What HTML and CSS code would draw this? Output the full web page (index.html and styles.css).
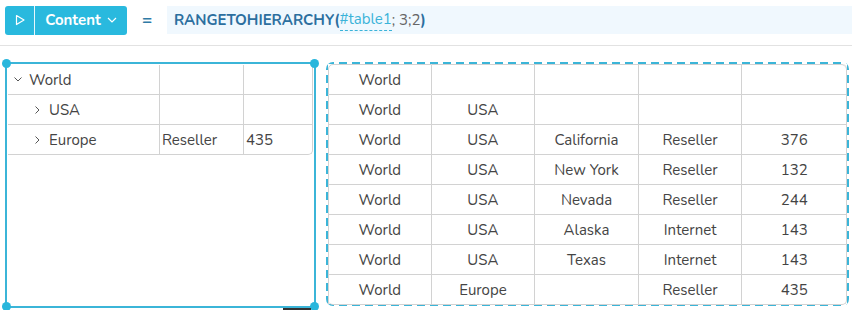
FILE: index.html
```html
<!DOCTYPE html>
<html lang="en">
<head>
  <meta charset="UTF-8">
  <title>Range to hierarchy</title>
  <link rel="stylesheet" href="styles.css">
</head>
<body>
  <div class="toolbar">
    <div class="btn-group">
      <button class="btn-run">
        <svg width="12" height="12" viewBox="0 0 12 12"><path d="M2.5 1.5 L10 6 L2.5 10.5 Z" fill="none" stroke="#fff" stroke-width="1.2" stroke-linejoin="round"/></svg>
      </button>
      <button class="btn-mode">Content
        <svg width="10" height="6" viewBox="0 0 10 6"><path d="M1 1 L5 5 L9 1" fill="none" stroke="#fff" stroke-width="1.2"/></svg>
      </button>
    </div>
    <div class="equals">=</div>
    <div class="formula">
      <span class="fn">RANGETOHIERARCHY(</span><span class="ref">#table1</span><span class="args">; 3;2</span><span class="fn">)</span>
    </div>
  </div>

  <div class="sheet">
    <div class="selection">
      <span class="dot tl"></span><span class="dot tr"></span>
      <span class="dot bl"></span><span class="dot br"></span>
      <table class="tree">
        <colgroup><col class="c1"><col class="c2"><col class="c3"></colgroup>
        <tr>
          <td class="lvl1"><svg class="chev" width="8" height="5" viewBox="0 0 8 5"><path d="M0.5 0.5 L4 4 L7.5 0.5" fill="none" stroke="#555" stroke-width="1"/></svg>World</td>
          <td></td>
          <td></td>
        </tr>
        <tr>
          <td class="lvl2"><svg class="chev" width="5" height="8" viewBox="0 0 5 8"><path d="M0.5 0.5 L4 4 L0.5 7.5" fill="none" stroke="#555" stroke-width="1"/></svg>USA</td>
          <td></td>
          <td></td>
        </tr>
        <tr>
          <td class="lvl2"><svg class="chev" width="5" height="8" viewBox="0 0 5 8"><path d="M0.5 0.5 L4 4 L0.5 7.5" fill="none" stroke="#555" stroke-width="1"/></svg>Europe</td>
          <td>Reseller</td>
          <td>435</td>
        </tr>
      </table>
    </div>

    <div class="source">
      <table class="flat">
        <tr><td>World</td><td></td><td></td><td></td><td></td></tr>
        <tr><td>World</td><td>USA</td><td></td><td></td><td></td></tr>
        <tr><td>World</td><td>USA</td><td>California</td><td>Reseller</td><td>376</td></tr>
        <tr><td>World</td><td>USA</td><td>New York</td><td>Reseller</td><td>132</td></tr>
        <tr><td>World</td><td>USA</td><td>Nevada</td><td>Reseller</td><td>244</td></tr>
        <tr><td>World</td><td>USA</td><td>Alaska</td><td>Internet</td><td>143</td></tr>
        <tr><td>World</td><td>USA</td><td>Texas</td><td>Internet</td><td>143</td></tr>
        <tr><td>World</td><td>Europe</td><td></td><td>Reseller</td><td>435</td></tr>
      </table>
    </div>
  </div>
  <div class="scroll-thumb"></div>
</body>
</html>
```

FILE: styles.css
```css
body {
  margin: 0;
  font-family: "Nunito", "Lato", "Noto Sans", sans-serif;
  color: #444;
  background: #fff;
  width: 852px;
  height: 310px;
  overflow: hidden;
  position: relative;
}

.toolbar {
  display: flex;
  align-items: center;
  height: 46px;
  padding-left: 5px;
  border-bottom: 1px solid #e2e2e2;
  box-sizing: border-box;
}

.btn-group {
  display: flex;
  height: 29px;
  background: #29b9de;
  border-radius: 3px;
  margin-top: -5px;
}

.btn-group button {
  border: none;
  background: none;
  color: #fff;
  font-family: inherit;
  cursor: pointer;
  display: flex;
  align-items: center;
  padding: 0;
}

.btn-run {
  width: 30px;
  justify-content: center;
  border-right: 1px solid #e8f7fc !important;
}

.btn-mode {
  width: 92px;
  justify-content: center;
  gap: 6px;
  font-size: 15px;
  font-weight: 700;
}

.equals {
  width: 40px;
  text-align: center;
  color: #2f7aa6;
  font-size: 17px;
  font-weight: 700;
  margin-top: -5px;
}

.formula {
  flex: 1;
  height: 28px;
  margin-top: -5px;
  background: #f0f8fe;
  display: flex;
  align-items: center;
  padding-left: 7px;
  font-size: 15px;
}

.fn {
  color: #2c6f9f;
  font-weight: 700;
}

.ref {
  color: #3ab3d9;
  border-bottom: 1px dashed #3ab3d9;
  padding-bottom: 1px;
}

.args {
  color: #666;
}

.sheet {
  display: flex;
  gap: 10px;
  padding: 16px 0 0 5px;
}

.selection {
  position: relative;
  width: 305px;
  height: 240px;
  border: 2px solid #3bb5d8;
  padding: 1px;
}

.dot {
  position: absolute;
  width: 9px;
  height: 9px;
  border-radius: 50%;
  background: #29b6dc;
}

.dot.tl { left: -5px; top: -5px; }
.dot.tr { right: -5px; top: -5px; }
.dot.bl { left: -5px; bottom: -5px; }
.dot.br { right: -5px; bottom: -5px; }

table {
  border-collapse: separate;
  border-spacing: 0;
  font-size: 15px;
  table-layout: fixed;
}

td {
  height: 29px;
  padding: 0;
  border-right: 1px solid #d2d2d2;
  border-bottom: 1px solid #d2d2d2;
  white-space: nowrap;
}

tr td:last-child {
  border-right: none;
}

.tree {
  width: 305px;
  border: 1px solid #d2d2d2;
  border-top: none;
  border-left: none;
  border-radius: 0 0 5px 0;
}

.tree tr:last-child td {
  border-bottom: none;
}

.tree td {
  padding-left: 2px;
}

.c1 { width: 152px; }
.c2 { width: 84px; }

.tree .lvl1 {
  padding-left: 6px;
}

.tree .lvl2 {
  padding-left: 27px;
}

.chev {
  margin-right: 7px;
  vertical-align: middle;
  position: relative;
  top: -1px;
}

.lvl2 .chev {
  margin-right: 9px;
}

.source {
  width: 519px;
  height: 240px;
  padding: 2px;
  border-radius: 7px;
  background-image:
    repeating-linear-gradient(90deg, #3bb5d8 0 8px, transparent 8px 13px),
    repeating-linear-gradient(90deg, #3bb5d8 0 8px, transparent 8px 13px),
    repeating-linear-gradient(180deg, #3bb5d8 0 8px, transparent 8px 13px),
    repeating-linear-gradient(180deg, #3bb5d8 0 8px, transparent 8px 13px);
  background-size: 100% 2px, 100% 2px, 2px 100%, 2px 100%;
  background-position: left top, left bottom, left top, right top;
  background-repeat: no-repeat;
}

.flat {
  width: 519px;
  border: 1px solid #d2d2d2;
  border-radius: 5px;
  border-left: none;
  border-top: none;
}

.flat tr:first-child td {
  border-top: 1px solid #d2d2d2;
}

.flat tr td:first-child {
  border-left: 1px solid #d2d2d2;
}

.flat tr:first-child td:first-child { border-top-left-radius: 5px; }
.flat tr:first-child td:last-child { border-top-right-radius: 5px; }

.flat tr:last-child td {
  border-bottom: none;
}

.flat td {
  text-align: center;
}

.scroll-thumb {
  position: absolute;
  left: 283px;
  top: 308px;
  width: 28px;
  height: 2px;
  background: #333;
}
```
